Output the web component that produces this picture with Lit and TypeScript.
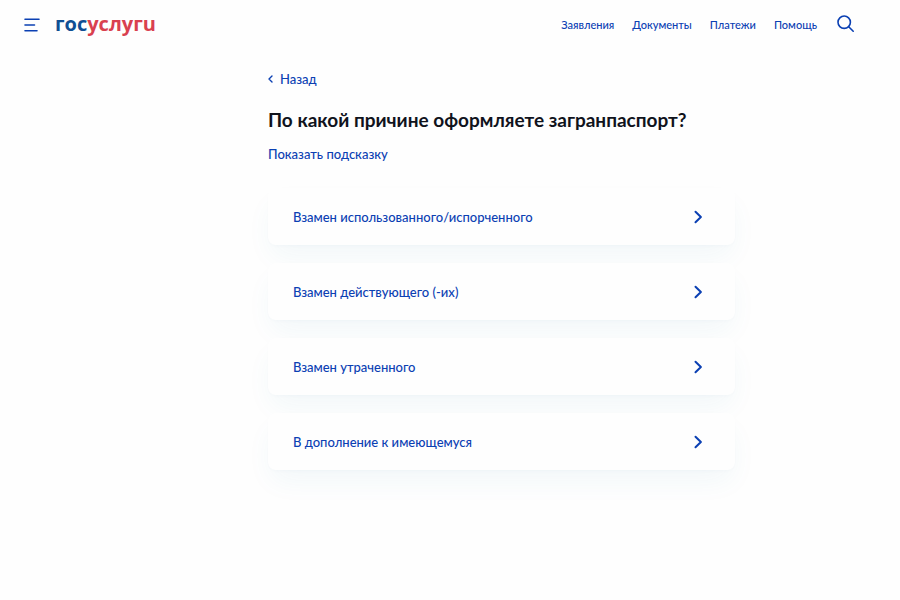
import { LitElement, html, css } from "lit";
import { customElement, property } from "lit/decorators.js";

@customElement("site-header")
class SiteHeader extends LitElement {
  static styles = css`
    :host {
      display: block;
    }
    .bar {
      display: flex;
      align-items: center;
      height: 48px;
      padding: 0 45px 0 24px;
    }
    button {
      display: flex;
      padding: 0;
      border: 0;
      background: none;
      color: inherit;
      cursor: pointer;
    }
    a {
      color: inherit;
      text-decoration: none;
    }
    .logo {
      margin-left: 15px;
      font: 700 20px/24px "Open Sans", sans-serif;
      color: #0f4f93;
    }
    .logo-red {
      color: #d9404f;
    }
    nav {
      display: flex;
      gap: 18px;
      margin-left: auto;
      font-size: 11px;
      line-height: 16px;
      padding-top: 2px;
    }
    .search {
      margin-left: 20px;
    }
    .menu {
      padding-top: 2px;
    }
  `;

  links = ["Заявления", "Документы", "Платежи", "Помощь"];

  render() {
    return html`
      <header class="bar">
        <button class="menu" aria-label="Меню">
          <svg width="16" height="14" viewBox="0 0 16 14" fill="none" stroke="currentColor" stroke-width="1.6" stroke-linecap="round">
            <path d="M1 1.2h14M1 7h9.5M1 12.8h12" />
          </svg>
        </button>
        <a class="logo" href="#" aria-label="госуслуги">гос<span class="logo-red">услугu</span></a>
        <nav>${this.links.map((l) => html`<a href="#">${l}</a>`)}</nav>
        <button class="search" aria-label="Поиск">
          <svg width="18" height="18" viewBox="0 0 18 18" fill="none" stroke="currentColor" stroke-width="1.6" stroke-linecap="round">
            <circle cx="7.2" cy="7.2" r="6.2" />
            <path d="M11.7 11.7L16.2 16.2" />
          </svg>
        </button>
      </header>
    `;
  }
}

@customElement("option-card")
class OptionCard extends LitElement {
  @property() label = "";

  static styles = css`
    :host {
      display: block;
    }
    .card {
      display: flex;
      align-items: center;
      justify-content: space-between;
      width: 100%;
      min-height: 57px;
      padding: 8px 32px 8px 25px;
      border: 0;
      border-radius: 8px;
      background: #fefefe;
      box-shadow: 0 14px 28px -4px rgba(40, 130, 170, 0.06), 0 2px 4px -2px rgba(40, 80, 120, 0.04);
      box-sizing: border-box;
      color: inherit;
      font: inherit;
      text-align: left;
      cursor: pointer;
    }
  `;

  render() {
    return html`
      <button class="card">
        <span>${this.label}</span>
        <svg width="9" height="14" viewBox="0 0 9 14" fill="none" stroke="currentColor" stroke-width="2" stroke-linecap="round" stroke-linejoin="round">
          <path d="M1.5 1.7L6.9 7L1.5 12.3" />
        </svg>
      </button>
    `;
  }
}

@customElement("app-root")
class AppRoot extends LitElement {
  static styles = css`
    :host {
      display: block;
      min-height: 100vh;
      background: #fefefe;
      color: #0b40b3;
      font-family: Lato, "Noto Sans", sans-serif;
      font-weight: 500;
    }
    main {
      display: grid;
      grid-template-columns: 268fr minmax(300px, 467fr) 165fr;
      padding: 20px 0 48px;
      font-size: 13px;
      line-height: 20px;
    }
    .content {
      grid-column: 2;
    }
    a {
      color: inherit;
      text-decoration: none;
    }
    .back {
      display: inline-flex;
      align-items: center;
      gap: 7px;
    }
    h1 {
      margin: 17px 0 10px;
      color: #10131c;
      font-size: 19px;
      line-height: 28px;
      font-weight: 700;
    }
    .hint {
      display: block;
    }
    .options {
      display: grid;
      gap: 18px;
      margin: 24px 0 0;
      padding: 0;
      list-style: none;
    }
  `;

  options = [
    "Взамен использованного/испорченного",
    "Взамен действующего (-их)",
    "Взамен утраченного",
    "В дополнение к имеющемуся",
  ];

  render() {
    return html`
      <site-header></site-header>
      <main>
        <div class="content">
          <a class="back" href="#">
            <svg width="5" height="8" viewBox="0 0 5 8" fill="none" stroke="currentColor" stroke-width="1.4" stroke-linecap="round" stroke-linejoin="round">
              <path d="M4 1L1 4L4 7" />
            </svg>
            Назад
          </a>
          <h1>По какой причине оформляете загранпаспорт?</h1>
          <a class="hint" href="#">Показать подсказку</a>
          <ul class="options">
            ${this.options.map((o) => html`<li><option-card .label=${o}></option-card></li>`)}
          </ul>
        </div>
      </main>
    `;
  }
}
